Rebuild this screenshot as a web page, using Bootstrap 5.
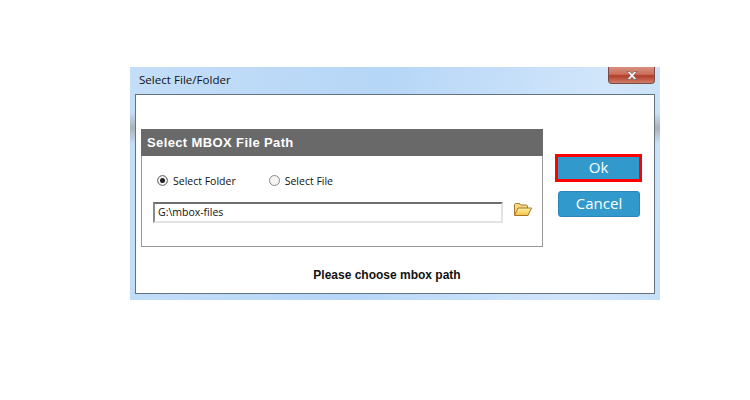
<!doctype html>
<html lang="en">
<head>
  <meta charset="utf-8" />
  <title>Select File/Folder</title>
  <link href="https://cdn.jsdelivr.net/npm/bootstrap@5.3.6/dist/css/bootstrap.min.css" rel="stylesheet" />
  <style>
    body {
      background: #fff;
      font-family: "Open Sans", "Liberation Sans", sans-serif;
      font-size: 10.5px;
      color: #111;
    }
    .dlg-window {
      width: 530px;
      height: 233px;
      margin: 67px 0 0 130px;
      background:
        linear-gradient(transparent, #a9b3bc, transparent) left 45px / 5px 32px no-repeat,
        linear-gradient(transparent, #a9b3bc, transparent) right 45px / 5px 32px no-repeat,
        linear-gradient(100deg, #c4def8 0%, #b6d6f7 45%, #d2e6fb 85%, #c6dff8 100%);
    }
    .dlg-title {
      height: 27px;
      padding: 5px 0 0 9px;
      font-size: 11.6px;
      line-height: 16px;
    }
    .dlg-close {
      width: 47px;
      height: 17px;
      margin-right: 5px;
      background: linear-gradient(#d9917f 0%, #c9705c 45%, #b23c28 55%, #cf7f6a 100%);
      border: 1px solid #7c4a42;
      border-top: 0;
      border-radius: 0 0 4px 4px;
    }
    .dlg-body {
      height: 200px;
      margin: 0 5px;
      padding: 34px 0 0 5px;
      background: #fff;
      border: 1px solid #65737f;
    }
    .path-col { width: 402px; }
    .path-head {
      height: 27px;
      padding-left: 6px;
      background: #696969;
      color: #fff;
      font-family: "Liberation Sans", sans-serif;
      font-size: 13px;
      font-weight: 700;
      line-height: 27px;
      letter-spacing: .38px;
    }
    .path-box {
      height: 91px;
      padding: 17px 0 0 11px;
      border: 1px solid #999;
      border-top: 0;
    }
    .path-pick { padding: 1px 0 0 4px; }
    .radio-dot {
      width: 11px;
      height: 11px;
      margin: -2px 5px 0 0;
      border: 1px solid #8a8a8a;
      border-radius: 50%;
      background: #f4f4f4;
    }
    .radio-dot.on { box-shadow: inset 0 0 0 2px #f4f4f4; background: #222; }
    .radio-next { margin-left: 33px; }
    .path-row { margin-top: 12px; }
    .path-text {
      width: 350px;
      height: 21px;
      padding-left: 3px;
      border: 2px solid #e3e3e3;
      border-top-color: #6e6e6e;
      border-left-color: #8a8a8a;
      line-height: 16px;
    }
    .path-open { margin-left: 10px; }
    .path-msg {
      margin: 19px 0 0 90px;
      font-family: "Liberation Sans", sans-serif;
      font-size: 12px;
      font-weight: 700;
      text-align: center;
    }
    .side-col { width: 87px; margin-left: 12px; padding-top: 25px; }
    .act-btn {
      display: block;
      width: 82px;
      height: 26px;
      margin-left: 3px;
      padding: 0 0 2px;
      background: #3299cc;
      border: 1px solid #2b86b5;
      border-radius: 3px;
      color: #fff;
      font-size: 15px;
      line-height: 20px;
    }
    .act-ok {
      width: 87px;
      height: 28px;
      margin: 0 0 9px;
      border: 3px solid #f00;
      border-radius: 0;
    }
  </style>
</head>
<body>
  <div class="dlg-window">
    <div class="d-flex justify-content-between">
      <div class="dlg-title">Select File/Folder</div>
      <div class="dlg-close d-flex align-items-center justify-content-center">
        <svg width="14" height="11" viewBox="0 0 14 11"><path d="M2 1.5h3l2 2.2 2-2.2h3L8.7 5.5 12 9.5H9L7 7.2 5 9.5H2l3.3-4z" fill="#f2f2f2" stroke="#6b5a58" stroke-width=".7"/></svg>
      </div>
    </div>
    <div class="dlg-body">
      <div class="d-flex">
        <div class="path-col">
          <div class="path-head">Select MBOX File Path</div>
          <div class="path-box">
            <div class="path-pick d-flex align-items-center">
              <span class="radio-dot on"></span><span>Select Folder</span>
              <span class="radio-dot radio-next"></span><span>Select File</span>
            </div>
            <div class="path-row d-flex align-items-start">
              <div class="path-text">G:\mbox-files</div>
              <svg class="path-open" width="19" height="15" viewBox="0 0 19 15">
                <defs>
                  <linearGradient id="folderFront" x1="0" y1="0" x2="0" y2="1">
                    <stop offset="0" stop-color="#fff3a8"/>
                    <stop offset="1" stop-color="#f2c23e"/>
                  </linearGradient>
                </defs>
                <path d="M1.5 13V2.5l1-1h4l1 1.5h6l1 1v2" fill="#f6dc80" stroke="#a8742c"/>
                <path d="M1.5 13.5 5 6h13.5L15 13.5z" fill="url(#folderFront)" stroke="#a8742c"/>
              </svg>
            </div>
          </div>
          <div class="path-msg">Please choose mbox path</div>
        </div>
        <div class="side-col">
          <button type="button" class="act-btn act-ok">Ok</button>
          <button type="button" class="act-btn">Cancel</button>
        </div>
      </div>
    </div>
  </div>
  <script src="https://cdn.jsdelivr.net/npm/bootstrap@5.3.6/dist/js/bootstrap.bundle.min.js"></script>
</body>
</html>
